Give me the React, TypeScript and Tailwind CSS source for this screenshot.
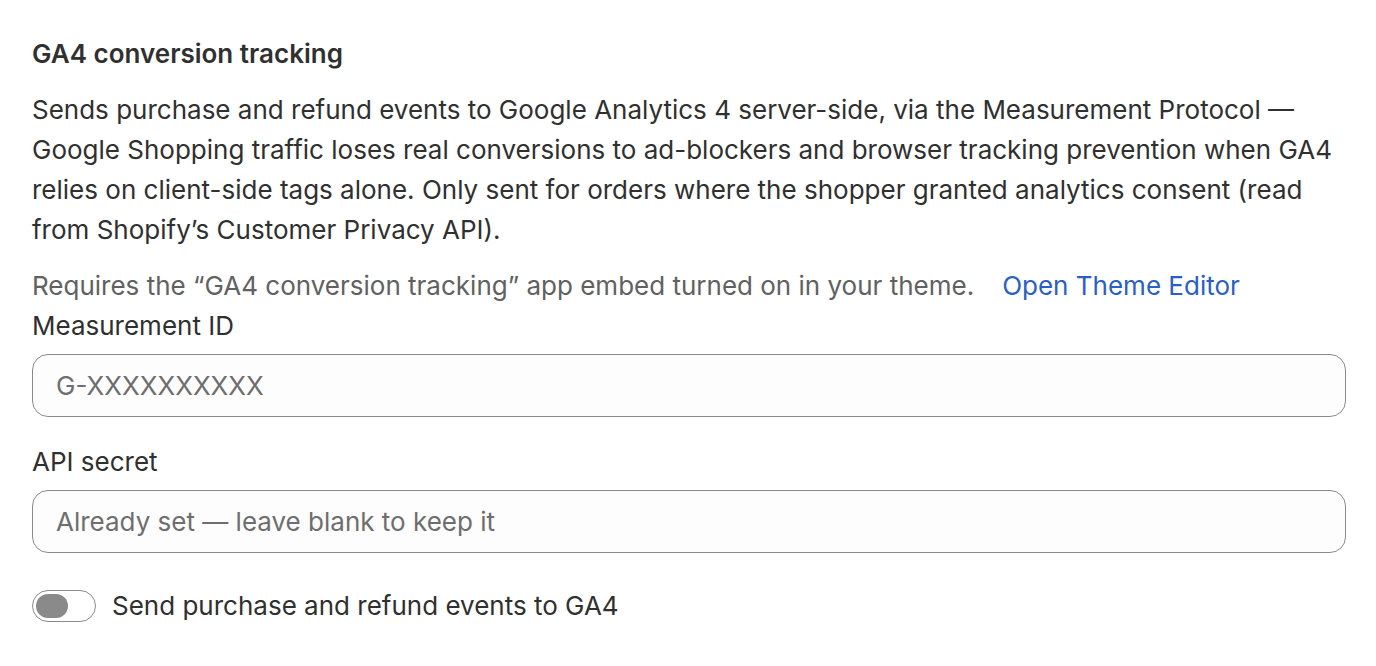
import React, { useState } from 'react';

const font = { fontFamily: 'Inter, "Noto Sans", sans-serif' };

const App = () => {
  const [measurementId, setMeasurementId] = useState('');
  const [secret, setSecret] = useState('');
  const [enabled, setEnabled] = useState(false);

  return (
    <div className="min-h-[666px] bg-white pl-8 pr-[30px] pt-[38px] text-[#303030]" style={font}>
      <h2 className="text-[26px] leading-[32px] font-semibold">GA4 conversion tracking</h2>

      <p className="mt-[20px] text-[26px] leading-[40px]">
        Sends purchase and refund events to Google Analytics 4 server-side, via the Measurement Protocol —
        Google Shopping traffic loses real conversions to ad-blockers and browser tracking prevention when GA4
        relies on client-side tags alone. Only sent for orders where the shopper granted analytics consent (read
        from Shopify’s Customer Privacy API).
      </p>

      <p className="mt-[16px] text-[26px] leading-[40px] text-[#616161]">
        Requires the “GA4 conversion tracking” app embed turned on in your theme.
        <a href="#" className="ml-[28px] text-[#2a5fc6]">Open Theme Editor</a>
      </p>

      <label className="block text-[26px] leading-[40px]">Measurement ID</label>
      <input
        value={measurementId}
        onChange={(e) => setMeasurementId(e.target.value)}
        placeholder="G-XXXXXXXXXX"
        className="mt-[8px] w-full h-[63px] rounded-[16px] border border-[#8a8a8a] bg-[#fdfdfd] px-[23px] text-[26px] outline-none placeholder:text-[#6e6e6e]"
      />

      <label className="block mt-[25px] text-[26px] leading-[40px]">API secret</label>
      <input
        value={secret}
        onChange={(e) => setSecret(e.target.value)}
        placeholder="Already set — leave blank to keep it"
        className="mt-[8px] w-full h-[63px] rounded-[16px] border border-[#8a8a8a] bg-[#fdfdfd] px-[23px] text-[26px] outline-none placeholder:text-[#6e6e6e]"
      />

      <div className="mt-[33px] flex items-center gap-[16px]">
        <button
          onClick={() => setEnabled(!enabled)}
          className={`flex h-[32px] w-[64px] items-center rounded-full border border-[#8a8a8a] px-[3px] ${enabled ? 'justify-end bg-[#303030]' : 'bg-white'}`}
        >
          <span className={`h-[24px] w-[32px] rounded-full ${enabled ? 'bg-white' : 'bg-[#8a8a8a]'}`} />
        </button>
        <span className="text-[26px] leading-[40px]">Send purchase and refund events to GA4</span>
      </div>
    </div>
  );
};

export default App;
